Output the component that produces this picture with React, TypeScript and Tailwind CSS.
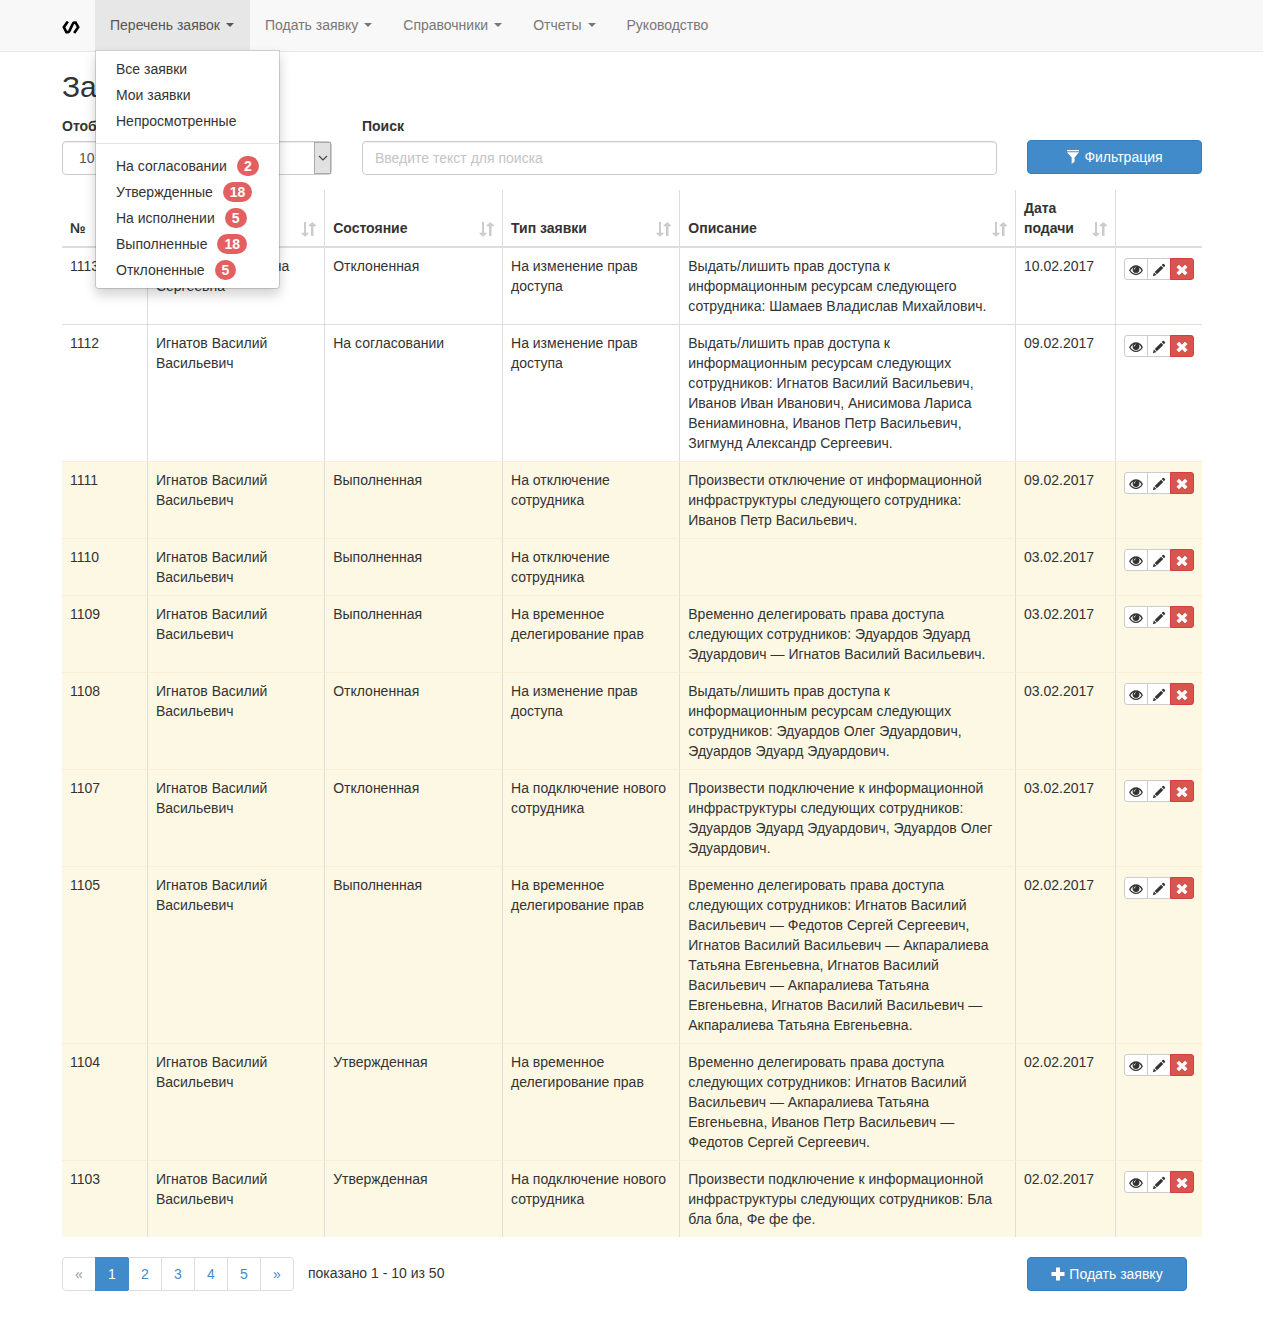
import React from "react";

const STAFF = "Игнатов Василий Васильевич";

type Row = { id: string; name: string; state: string; kind: string; text: string; date: string; hl?: boolean };

const rows: Row[] = [
  { id: "1113", name: "Акпаралиева Жанна Сергеевна", state: "Отклоненная", kind: "На изменение прав доступа", text: "Выдать/лишить прав доступа к информационным ресурсам следующего сотрудника: Шамаев Владислав Михайлович.", date: "10.02.2017" },
  { id: "1112", name: STAFF, state: "На согласовании", kind: "На изменение прав доступа", text: "Выдать/лишить прав доступа к информационным ресурсам следующих сотрудников: Игнатов Василий Васильевич, Иванов Иван Иванович, Анисимова Лариса Вениаминовна, Иванов Петр Васильевич, Зигмунд Александр Сергеевич.", date: "09.02.2017" },
  { id: "1111", name: STAFF, state: "Выполненная", kind: "На отключение сотрудника", text: "Произвести отключение от информационной инфраструктуры следующего сотрудника: Иванов Петр Васильевич.", date: "09.02.2017", hl: true },
  { id: "1110", name: STAFF, state: "Выполненная", kind: "На отключение сотрудника", text: "", date: "03.02.2017", hl: true },
  { id: "1109", name: STAFF, state: "Выполненная", kind: "На временное делегирование прав", text: "Временно делегировать права доступа следующих сотрудников: Эдуардов Эдуард Эдуардович — Игнатов Василий Васильевич.", date: "03.02.2017", hl: true },
  { id: "1108", name: STAFF, state: "Отклоненная", kind: "На изменение прав доступа", text: "Выдать/лишить прав доступа к информационным ресурсам следующих сотрудников: Эдуардов Олег Эдуардович, Эдуардов Эдуард Эдуардович.", date: "03.02.2017", hl: true },
  { id: "1107", name: STAFF, state: "Отклоненная", kind: "На подключение нового сотрудника", text: "Произвести подключение к информационной инфраструктуры следующих сотрудников: Эдуардов Эдуард Эдуардович, Эдуардов Олег Эдуардович.", date: "03.02.2017", hl: true },
  { id: "1105", name: STAFF, state: "Выполненная", kind: "На временное делегирование прав", text: "Временно делегировать права доступа следующих сотрудников: Игнатов Василий Васильевич — Федотов Сергей Сергеевич, Игнатов Василий Васильевич — Акпаралиева Татьяна Евгеньевна, Игнатов Василий Васильевич — Акпаралиева Татьяна Евгеньевна, Игнатов Василий Васильевич — Акпаралиева Татьяна Евгеньевна.", date: "02.02.2017", hl: true },
  { id: "1104", name: STAFF, state: "Утвержденная", kind: "На временное делегирование прав", text: "Временно делегировать права доступа следующих сотрудников: Игнатов Василий Васильевич — Акпаралиева Татьяна Евгеньевна, Иванов Петр Васильевич — Федотов Сергей Сергеевич.", date: "02.02.2017", hl: true },
  { id: "1103", name: STAFF, state: "Утвержденная", kind: "На подключение нового сотрудника", text: "Произвести подключение к информационной инфраструктуры следующих сотрудников: Бла бла бла, Фе фе фе.", date: "02.02.2017", hl: true },
];

const columns = [
  { title: "№", width: "w-[7.45%]" },
  { title: "Инициатор", width: "w-[15.55%]" },
  { title: "Состояние", width: "w-[15.6%]" },
  { title: "Тип заявки", width: "w-[15.55%]" },
  { title: "Описание", width: "w-[29.45%]" },
  { title: "Дата подачи", width: "w-[8.8%]" },
];

const menuTop = ["Все заявки", "Мои заявки", "Непросмотренные"];
const menuBottom: [string, number][] = [
  ["На согласовании", 2],
  ["Утвержденные", 18],
  ["На исполнении", 5],
  ["Выполненные", 18],
  ["Отклоненные", 5],
];

function Caret() {
  return <span className="ml-1.5 inline-block border-x-4 border-t-4 border-x-transparent border-t-current align-middle" />;
}

function SortIcon() {
  return (
    <svg className="mb-px h-4 w-[15px] shrink-0" viewBox="0 0 15 16" fill="#ccc" aria-hidden="true">
      <path d="M3 1h2v10.800h2.500v1L4 15.800 .5 12.800v-1H3z" />
      <path d="M10 15h2.500V5.200H15v-1L11.300 1 7.600 4.200v1H10z" />
    </svg>
  );
}

function EyeIcon() {
  return (
    <svg className="h-3.5 w-3.5" viewBox="0 0 14 14" aria-hidden="true">
      <path d="M.8 7.200C2.300 4.500 4.500 3 7 3s4.700 1.500 6.200 4.200C11.700 9.900 9.500 11.300 7 11.300S2.300 9.900.8 7.200z" fill="none" stroke="#333" strokeWidth="1.300" />
      <circle cx="7" cy="6.600" r="3.400" fill="#333" />
      <path d="M5.200 6.500Q5.300 5.100 6.600 4.700" fill="none" stroke="#fff" strokeWidth=".9" />
    </svg>
  );
}

function PencilIcon() {
  return (
    <svg className="h-3.5 w-3.5" viewBox="0 0 14 14" fill="#333" aria-hidden="true">
      <path d="M.8 13.200l1.100-3.700 2.600 2.600z" />
      <path d="M2.700 9.100l6.400-6.400 2.200 2.200-6.400 6.400z" />
      <path d="M9.700 2.100l1-1q.6-.5 1.200 0l1 1q.5.600 0 1.200l-1 1z" />
    </svg>
  );
}

function CrossIcon() {
  return (
    <svg className="h-3.5 w-3.5" viewBox="0 0 14 14" fill="#fff" stroke="#fff" strokeWidth=".6" strokeLinejoin="round" aria-hidden="true">
      <path d="M4 2l3 3 3-3 2.200 2.200-2.900 2.800 2.900 2.800L10 12 7 9l-3 3-2.200-2.200L4.700 7 1.800 4.200z" />
    </svg>
  );
}

export default function App() {
  return (
    <div className="min-h-screen bg-white pb-11 font-['Liberation_Sans',Arial,sans-serif] text-sm leading-5 text-[#333]">
      <header className="border-b border-[#e7e7e7] bg-[#f8f8f8] pb-px">
        <nav className="mx-auto flex max-w-[1171px] items-start pr-[15px] pl-4">
          <a href="#" aria-label="Главная" className="flex h-[50px] w-[33px] items-center pt-1">
            <svg className="h-[13px] w-[18px]" viewBox="0 0 18 13" fill="none" stroke="#000" strokeWidth="2.600" aria-hidden="true">
              <path d="M5.800 .5L1.800 6.200L4.400 11.100H6.200Q7.200 10.700 7.600 9.600L10.700 3Q11.300 1.600 12.400 1.600H13.600L16.200 6.200L12.200 12" />
            </svg>
          </a>
          <div className="relative">
            <button className="flex h-[50px] w-[155px] items-center bg-[#e7e7e7] px-[15px] text-[#555]">
              Перечень заявок
              <Caret />
            </button>
            <ul className="absolute top-[50px] left-0 z-10 w-[185px] rounded-b border border-black/15 bg-white bg-clip-padding py-[5px] shadow-[0_6px_12px_rgba(0,0,0,0.175)]">
              {menuTop.map((t) => (
                <li key={t}>
                  <a href="#" className="block px-5 py-[3px]">{t}</a>
                </li>
              ))}
              <li className="my-[9px] h-px bg-[#e5e5e5]" />
              {menuBottom.map(([t, n]) => (
                <li key={t}>
                  <a href="#" className="flex items-center px-5 py-[3px]">
                    {t}
                    <span className="ml-2.5 rounded-full bg-[#e46060] px-[7px] text-sm font-bold text-white">{n}</span>
                  </a>
                </li>
              ))}
            </ul>
          </div>
          {["Подать заявку", "Справочники", "Отчеты"].map((t) => (
            <button key={t} className="flex h-[50px] items-center pr-4 pl-[15px] text-[#777]">
              {t}
              <Caret />
            </button>
          ))}
          <a href="#" className="flex h-[50px] items-center px-[15px] text-[#777]">Руководство</a>
        </nav>
      </header>

      <main className="mx-auto max-w-[1171px] pr-[15px] pl-4">
        <h2 className="mt-[18px] mb-2.5 text-3xl leading-[33px] font-medium">Заявки</h2>

        <div className="mt-[13px] flex items-end gap-[30px]">
          <div className="w-[270px]">
            <label htmlFor="count" className="mb-[5px] block font-bold">Отображать</label>
            <div className="relative">
              <select id="count" defaultValue="10" className="block h-[34px] w-full appearance-none rounded border border-[#ccc] bg-white px-4 text-[#555] shadow-[inset_0_1px_1px_rgba(0,0,0,0.075)]">
                <option>10</option>
                <option>25</option>
                <option>50</option>
              </select>
              <span className="pointer-events-none absolute inset-y-px right-px flex w-[17px] items-center justify-center border border-[#aaa] bg-[#e1e1e1]">
                <svg className="h-2.5 w-2.5" viewBox="0 0 10 10" fill="none" stroke="#444" strokeWidth="1.200" aria-hidden="true">
                  <path d="M1 3l4 4 4-4" />
                </svg>
              </span>
            </div>
          </div>
          <div className="flex-1">
            <label htmlFor="search" className="mb-[5px] block font-bold">Поиск</label>
            <input id="search" placeholder="Введите текст для поиска" className="block h-[34px] w-full rounded border border-[#ccc] px-3 shadow-[inset_0_1px_1px_rgba(0,0,0,0.075)] placeholder:text-[#c4c4c4]" />
          </div>
          <button className="mb-px flex h-[34px] w-[175px] items-center justify-center gap-1 rounded border border-[#357ebd] bg-[#428bca] text-white">
            <svg className="h-3.5 w-3.5" viewBox="0 0 14 14" fill="#fff" aria-hidden="true">
              <path d="M1 0h12v1.200H1zM1 2.200h12L8.600 7.400v4.200L5.700 14V7.400z" />
            </svg>
            Фильтрация
          </button>
        </div>

        <table className="mt-[15px] w-full table-fixed border-separate border-spacing-0">
          <thead>
            <tr>
              {columns.map((c, i) => (
                <th key={c.title} className={`${c.width} border-b-2 border-[#ddd] p-2 text-left align-bottom font-bold ${i ? "border-l" : ""}`}>
                  <div className="flex items-end justify-between">
                    {c.title}
                    {i > 0 && <SortIcon />}
                  </div>
                </th>
              ))}
              <th aria-label="Действия" className="border-b-2 border-l border-[#ddd]" />
            </tr>
          </thead>
          <tbody>
            {rows.map((r, n) => {
              const line = n === 0 ? "" : r.hl ? "border-t border-t-[#fbeed5]" : "border-t border-t-[#ddd]";
              return (
                <tr key={r.id} className={r.hl ? "bg-[#fcf8e3]" : ""}>
                  {[r.id, r.name, r.state, r.kind, r.text, r.date].map((v, i) => (
                    <td key={i} className={`p-2 align-top ${line} ${i ? "border-l border-l-[#ddd]" : ""}`}>{v}</td>
                  ))}
                  <td className={`border-l border-l-[#ddd] px-2 pt-2.5 pb-2 align-top ${line}`}>
                    <div className="flex">
                      <button aria-label="Просмотр" className="flex h-[22px] w-6 items-center justify-center rounded-l-[3px] border border-[#ccc] bg-white pt-0.5"><EyeIcon /></button>
                      <button aria-label="Изменить" className="-ml-px flex h-[22px] w-6 items-center justify-center border border-[#ccc] bg-white pt-0.5"><PencilIcon /></button>
                      <button aria-label="Удалить" className="-ml-px flex h-[22px] w-6 items-center justify-center rounded-r-[3px] border border-[#d43f3a] bg-[#d9534f] pt-0.5"><CrossIcon /></button>
                    </div>
                  </td>
                </tr>
              );
            })}
          </tbody>
        </table>

        <div className="mt-5 flex items-start">
          <nav aria-label="Страницы" className="flex text-center text-[#428bca]">
            <a href="#" className="w-[34px] rounded-l border border-[#ddd] py-1.5 text-[#999]">«</a>
            <a href="#" aria-current="page" className="-ml-px w-[34px] border border-[#428bca] bg-[#428bca] py-1.5 text-white">1</a>
            {["2", "3", "4", "5"].map((p) => (
              <a key={p} href="#" className="-ml-px w-[34px] border border-l-0 border-[#ddd] py-1.5 pl-px">{p}</a>
            ))}
            <a href="#" className="-ml-px w-[34px] rounded-r border border-[#ddd] py-1.5">»</a>
          </nav>
          <p className="ml-3.5 pt-1.5">показано 1 - 10 из 50</p>
          <button className="mr-[15px] ml-auto flex h-[34px] w-40 items-center justify-center gap-1 rounded border border-[#357ebd] bg-[#428bca] text-white">
            <svg className="h-3.5 w-3.5" viewBox="0 0 14 14" fill="#fff" aria-hidden="true">
              <path d="M5 .5h4v4.500h4.500v4H9v4.500H5V9H.5V5H5z" />
            </svg>
            Подать заявку
          </button>
        </div>
      </main>
    </div>
  );
}
